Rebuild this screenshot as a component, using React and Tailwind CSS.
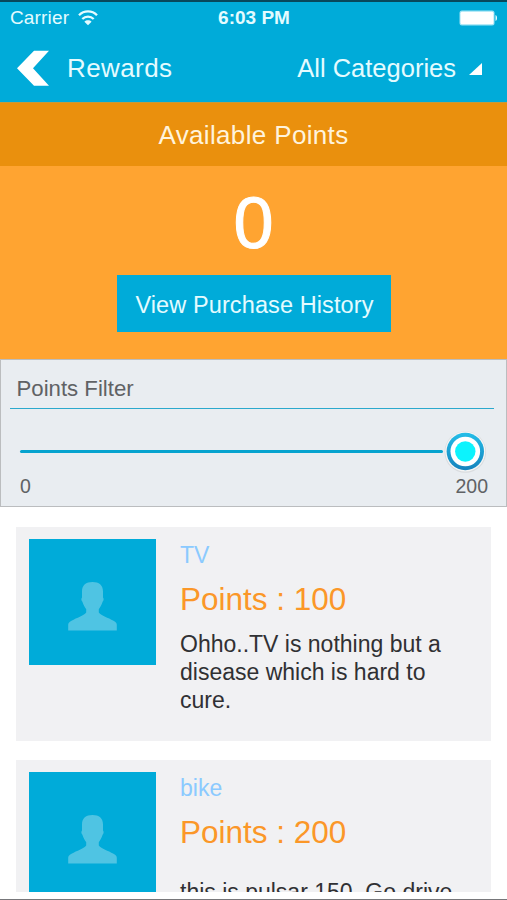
const rewards = [
    { id: 1, title: 'TV', points: 100, description: 'Ohho..TV is nothing but a disease which is hard to cure.' },
    { id: 2, title: 'bike', points: 200, description: 'this is pulsar 150. Go drive', short: true },
];

export default function App() {
    return (
        <div className="flex h-[900px] w-[507px] flex-col overflow-hidden border-t-2 border-[#08485c] bg-white font-['Liberation_Sans',Arial,sans-serif]">
            <Header />
            <PointsBalance />
            <PointsFilter />

            {/* Rewards list */}
            <div className="mx-4 mt-5 flex h-[365px] flex-none flex-col gap-[19px] overflow-hidden">
                {rewards.map((reward) => (
                    <RewardCard key={reward.id} reward={reward} />
                ))}
            </div>
            <div className="mt-auto h-px flex-none bg-[#77777a]" />
        </div>
    );
}

function Header() {
    return (
        <header className="h-[100px] flex-none bg-[#00abd9] text-[#e4fbff]">
            {/* Status bar */}
            <div className="grid h-8 grid-cols-3 items-center pl-[10px] pr-[9px] text-[19px] leading-8">
                <div className="flex items-center gap-[9px]">
                    <span className="tracking-[0.15px]">Carrier</span>
                    <WifiIcon />
                </div>
                <span className="text-center font-bold">6:03 PM</span>
                <div className="flex justify-end">
                    <BatteryIcon />
                </div>
            </div>

            {/* Nav bar */}
            <div className="flex h-[68px] items-center pl-[17px] pr-[25px]">
                <svg width="32" height="36" viewBox="0 0 32 36" fill="white">
                    <path d="M17 0.8H32L16 18.2L32 35.8H17L0 18.2Z" />
                </svg>
                <h1 className="ml-[18px] text-[26px] leading-[69px] tracking-[0.4px]">Rewards</h1>
                <div className="ml-auto flex items-center gap-[13px]">
                    <span className="text-[25.5px] leading-[68px]">All Categories</span>
                    <svg className="mt-px" width="13" height="12" viewBox="0 0 13 12" fill="white">
                        <path d="M13 0V12H0Z" />
                    </svg>
                </div>
            </div>
        </header>
    );
}

function PointsBalance() {
    return (
        <section className="h-[257px] flex-none bg-[#ffa431] text-center">
            <h2 className="h-16 border-t border-[#c59a3c] bg-[#ea900d] text-[26px] leading-[65px] tracking-[0.35px] text-[#fff3dc]">
                Available Points
            </h2>
            <p className="h-[109px] text-[72px] leading-[115px] text-white [-webkit-text-stroke:1px_white]">0</p>
            <button className="h-[57px] w-[274px] bg-[#00abd9] pl-[2px] pt-[3px] text-[23.5px] leading-[54px] tracking-[0.1px] text-[#e4fbff]">
                View Purchase History
            </button>
        </section>
    );
}

function PointsFilter() {
    return (
        <section className="h-[148px] flex-none border border-[#bbbdbf] bg-[#e9edf1] px-[9px] text-[#606265]">
            <h3 className="mr-[3px] h-[49px] border-b-[1.5px] border-[#2ba9cd] pl-[6.5px] text-[22.2px] leading-[57px]">Points Filter</h3>
            <div className="mt-[21px] flex h-[42px] items-center pl-[10px]">
                <div className="mt-px h-[3px] w-[423px] rounded-full bg-[#06a3cf]" />
                <SliderThumb />
            </div>
            <div className="flex justify-between pl-[10px] pr-[9px] text-[19.5px] leading-[28px]">
                <span>0</span>
                <span>200</span>
            </div>
        </section>
    );
}

function RewardCard({ reward }) {
    return (
        <article className="flex h-[214px] w-[475px] flex-none gap-6 bg-[#f1f1f3] pl-[13px] pt-3">
            <div className="flex h-[126px] w-[127px] flex-none items-center justify-center bg-[#00abd9]">
                <PersonIcon />
            </div>
            <div className="w-[285px]">
                <h4 className="h-[30px] text-[23px] leading-[32px] text-[#8bcaff]">{reward.title}</h4>
                <p className="h-[61px] text-[31.5px] leading-[61px] text-[#fb9728]">Points : {reward.points}</p>
                {/* shorter descriptions sit lower in the text block */}
                <p className={`text-[23px] leading-[28.2px] text-[#303033] ${reward.short ? 'pt-[15px]' : ''}`}>
                    {reward.description}
                </p>
            </div>
        </article>
    );
}

function WifiIcon() {
    return (
        <svg width="20" height="16" viewBox="0 0 20 16" fill="none" stroke="#e4fbff" strokeWidth="2.3">
            <path d="M1 5.2C6 0.2 14 0.2 19 5.2" />
            <path d="M4.3 9C7.5 5.9 12.5 5.9 15.7 9" />
            <path d="M10 15.3L6.4 11.7C8.4 9.8 11.6 9.8 13.6 11.7Z" fill="#e4fbff" stroke="none" />
        </svg>
    );
}

function BatteryIcon() {
    return (
        <svg width="39" height="16" viewBox="0 0 39 16">
            <rect x="0.5" y="0.5" width="35" height="15" rx="2.5" fill="#9ee3f5" />
            <rect x="1.5" y="1.8" width="33" height="12.4" rx="1.5" fill="white" />
            <path d="M36.5 5C38.5 5.5 38.5 10.5 36.5 11Z" fill="#e4fbff" />
        </svg>
    );
}

function SliderThumb() {
    return (
        <svg width="44" height="44" viewBox="0 0 44 44" className="flex-none">
            <defs>
                <linearGradient id="ring" x1="0" y1="0" x2="0" y2="1">
                    <stop offset="0" stopColor="#24bde8" />
                    <stop offset="1" stopColor="#1683bd" />
                </linearGradient>
            </defs>
            <circle cx="22.3" cy="23" r="20.8" fill="#d9dcdf" />
            <circle cx="22.3" cy="22.6" r="20" fill="#f5f5f5" />
            <circle cx="22.3" cy="22.5" r="18.7" fill="url(#ring)" />
            <circle cx="22.3" cy="22.5" r="14.8" fill="white" />
            <circle cx="22.3" cy="22.5" r="10.2" fill="#0cf3fd" />
        </svg>
    );
}

function PersonIcon() {
    return (
        <svg width="49" height="49" viewBox="0 0 49 49" fill="#4fc4e3" className="mt-[9px]">
            <path d="M24.5 0C31 0 35 3 35 9.5V15.5C36 16.5 35.8 18.5 34.6 19.8C33.5 23 32.5 25 30.8 27.3V30.5C33.5 34 40 35.5 45.5 38.8C48 40.2 48.8 41.2 48.8 43V48.5H0.2V43C0.2 41.2 1 40.2 3.5 38.8C9 35.5 15.5 34 18.2 30.5V27.3C16.5 25 15.5 23 14.4 19.8C13.2 18.5 13 16.5 14 15.5V9.5C14 3 18 0 24.5 0Z" />
        </svg>
    );
}
